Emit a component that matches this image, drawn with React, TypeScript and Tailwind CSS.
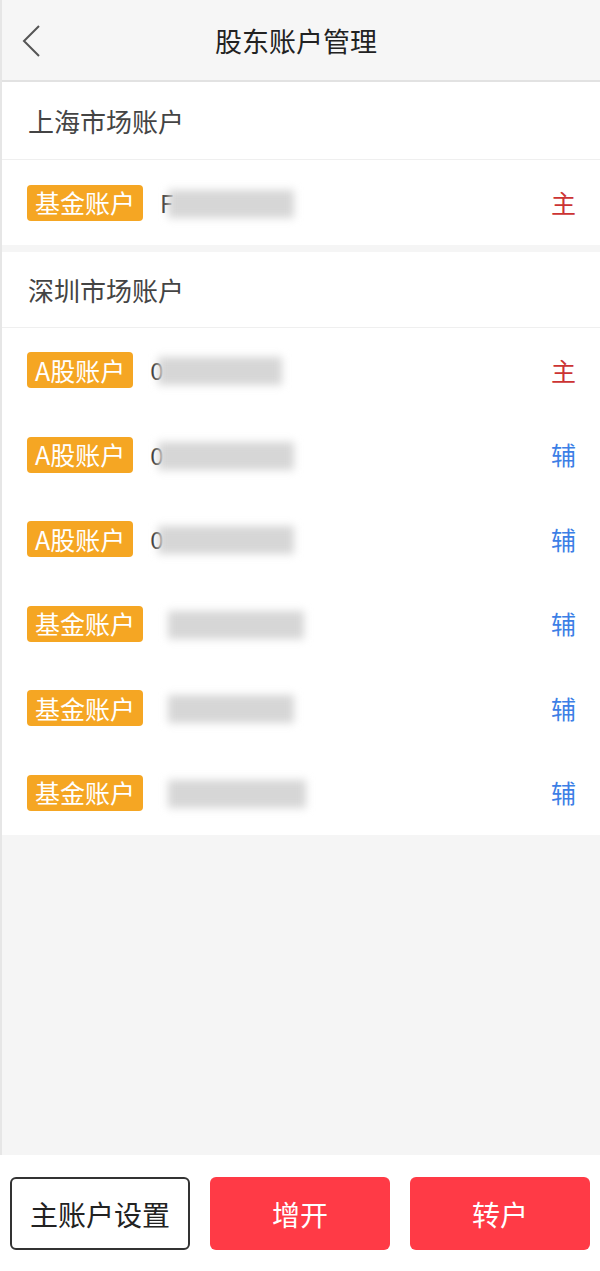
import React from "react";

const font = { fontFamily: '"Noto Sans CJK SC", "Noto Sans", sans-serif' };

type Row = { tag: string; prefix: string; blurW: number; role: "主" | "辅" };

function Tag({ text }: { text: string }) {
  return (
    <div className="h-[36px] px-[8px] flex items-center rounded-[4px] bg-[#f5a623] text-white text-[25px] leading-none">
      {text}
    </div>
  );
}

function AccountRow({ row, h }: { row: Row; h: string }) {
  return (
    <div className={`flex items-center pl-[25px] pr-[24px] ${h}`}>
      <Tag text={row.tag} />
      <div className="relative flex items-center ml-[17px] h-[36px]">
        <span className="text-[24px] text-[#333] leading-none">{row.prefix}</span>
        <div
          className="absolute top-[5px] left-[8px] h-[28px] bg-[#d6d6d6] blur-[4px]"
          style={{ width: row.blurW }}
        />
      </div>
      <div className="flex-1" />
      <span
        className={`text-[25px] leading-none ${row.role === "主" ? "text-[#cc3333]" : "text-[#3d7fe6]"}`}
      >
        {row.role}
      </span>
    </div>
  );
}

export default function App() {
  const sz: Row[] = [
    { tag: "A股账户", prefix: "0", blurW: 124, role: "主" },
    { tag: "A股账户", prefix: "0", blurW: 136, role: "辅" },
    { tag: "A股账户", prefix: "0", blurW: 136, role: "辅" },
    { tag: "基金账户", prefix: "", blurW: 136, role: "辅" },
    { tag: "基金账户", prefix: "", blurW: 126, role: "辅" },
    { tag: "基金账户", prefix: "", blurW: 138, role: "辅" },
  ];
  return (
    <div className="w-[600px] h-[1271px] flex flex-col bg-white" style={font}>
      <div className="flex-1 flex flex-col bg-[#f5f5f5] border-l-2 border-[#e6e6e6]">
        <div className="h-[82px] shrink-0 bg-[#f6f6f6] border-b-2 border-[#e2e2e2] relative flex items-center justify-center">
          <svg className="absolute left-[18px] top-[24px]" width="22" height="34" viewBox="0 0 22 34">
            <path d="M19 2 L4 17 L19 32" fill="none" stroke="#555" strokeWidth="2" />
          </svg>
          <span className="text-[27px] text-[#222] leading-none pr-[10px]">股东账户管理</span>
        </div>

        <div className="bg-white">
          <div className="h-[78px] flex items-center pl-[26px] border-b border-[#efefef] text-[26px] text-[#444]">
            上海市场账户
          </div>
          <AccountRow row={{ tag: "基金账户", prefix: "F", blurW: 126, role: "主" }} h="h-[85px]" />
        </div>
        <div className="h-[7px] shrink-0" />
        <div className="bg-white">
          <div className="h-[76px] flex items-center pl-[26px] border-b border-[#efefef] text-[26px] text-[#444]">
            深圳市场账户
          </div>
          {sz.map((r, i) => (
            <AccountRow key={i} row={r} h="h-[84.5px]" />
          ))}
        </div>
        <div className="flex-1" />
      </div>

      <div className="h-[116px] shrink-0 bg-white flex gap-[20px] px-[10px] pt-[22px]">
        <button className="w-[180px] h-[73px] rounded-[6px] border-2 border-[#333] bg-white text-[28px] text-[#222]">
          主账户设置
        </button>
        <button className="w-[180px] h-[73px] rounded-[6px] bg-[#ff3a46] text-[28px] text-white">
          增开
        </button>
        <button className="w-[180px] h-[73px] rounded-[6px] bg-[#ff3a46] text-[28px] text-white">
          转户
        </button>
      </div>
    </div>
  );
}
